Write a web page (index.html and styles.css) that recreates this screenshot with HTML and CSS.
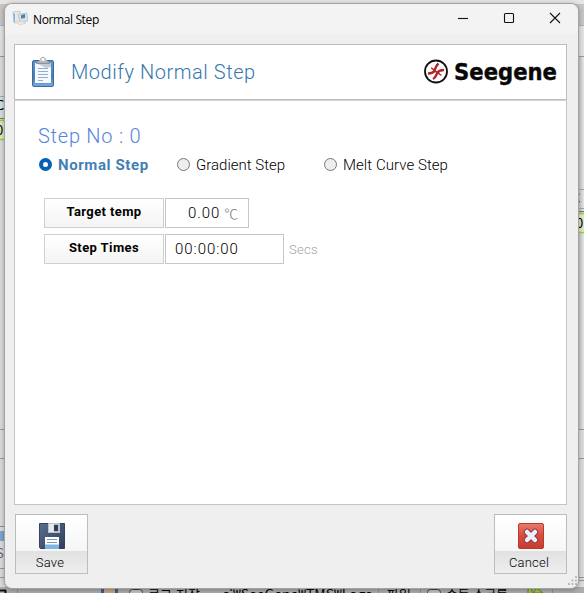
FILE: index.html
```html
<!DOCTYPE html>
<html lang="ko">
<head>
    <meta charset="UTF-8">
    <meta name="viewport" content="width=device-width, initial-scale=1.0">
    <title>Normal Step</title>
    <link rel="stylesheet" href="styles.css">
</head>
<body>
    <!-- Main application window behind the dialog -->
    <svg class="backdrop" width="584" height="593" viewBox="0 0 584 593">
        <defs>
            <linearGradient id="side" x1="0" y1="0" x2="1" y2="0">
                <stop offset="0" stop-color="#c4c4c4"/>
                <stop offset="1" stop-color="#e6e6e6"/>
            </linearGradient>
        </defs>
        <rect width="584" height="593" fill="#dcdcdc"/>
        <rect width="584" height="4" fill="#e6e6e6"/>
        <rect y="4" width="584" height="22" fill="#c6c6c6"/>
        <path d="M0 25.5h584" stroke="#9fb6d4"/>
        <rect y="26" width="584" height="30" fill="#e2e2e2"/>
        <path d="M0 56.5h584M0 429.5h584M0 458.5h584" stroke="#9a9a9a"/>
        <rect x="578" y="57" width="6" height="372" fill="url(#side)"/>
        <rect y="96" width="5" height="20" fill="#d3dde0"/>
        <path d="M0 96.5h5M578 189.5h6M578 208.5h6" stroke="#8ab0bd"/>
        <path d="M0 118.5h5M578 211.5h6" stroke="#8b6f68"/>
        <rect y="120" width="5" height="20" fill="#dbe8c2"/>
        <rect x="578" y="213" width="6" height="20" fill="#dbe8c2"/>
        <path d="M0 120.5h5M0 139.5h5M578 213.5h6M578 232.5h6" stroke="#94d42f" stroke-width="1.5"/>
        <text x="-4" y="110" class="back-text">C</text>
        <text x="-4" y="135" class="back-text">0</text>
        <text x="572" y="203" class="back-text">C</text>
        <text x="576" y="228" class="back-text">0</text>
        <path d="M0 526.5h5" stroke="#8e8e8e"/>
        <rect y="531" width="5" height="10" fill="#7da5cb"/>
        <text x="-4" y="558" class="back-text" fill="#667">S</text>
        <path d="M0 568.5h5M0 577.5h5M578 577.5h6M578 580.5h6" stroke="#999"/>
        <!-- Bottom tool bar -->
        <rect y="587" width="584" height="6" fill="#adadad"/>
        <path d="M17.5 587v6M378.5 587v6M420.5 587v6M552.5 587v6" stroke="#8d8d8d"/>
        <path d="M0 590.5h6M5.5 590v3" stroke="#111" stroke-width="2"/>
        <rect x="101" y="587" width="17" height="6" fill="#3b5d8e"/>
        <rect x="104" y="588" width="11" height="5" fill="#c9a486"/>
        <rect x="129.5" y="589.5" width="13" height="12" rx="3" fill="#c3c3c3" stroke="#444"/>
        <rect x="427.5" y="589.5" width="13" height="12" rx="3" fill="#c3c3c3" stroke="#444"/>
        <text x="148" y="599" class="back-text" textLength="52">로그 저장</text>
        <text x="222" y="599" class="back-text" textLength="150" lengthAdjust="spacingAndGlyphs">c:₩SeeGene₩TMS₩Logs</text>
        <text x="387" y="599" class="back-text" textLength="24">파일</text>
        <text x="446" y="599" class="back-text" textLength="62">수동 스크롤</text>
        <path d="M528 593v-6h4v6M533 593l4-5 6 5z" fill="#a6c63d" stroke="#5e7c2b"/>
    </svg>

    <div class="dialog">
        <!-- Title bar -->
        <div class="titlebar">
            <svg class="app-icon" width="16" height="16" viewBox="0 0 16 16">
                <path d="M1 2l7-1v11l-6 1z" fill="#e3e8ec" stroke="#b9c3ca" stroke-width=".8"/>
                <path d="M1 3l2 1v8l-1 0z" fill="#8fb3d0"/>
                <path d="M6 4l9-1 1 8-8 1z" fill="#d7dfe5" stroke="#b6bdc2" stroke-width=".7"/>
                <path d="M9 5l4-1v4l-4 .5z" fill="#4686b7"/>
                <path d="M3 12l7-1 4 2-6 2z" fill="#eee5d9" stroke="#ccc" stroke-width=".6"/>
            </svg>
            <span class="title">Normal Step</span>
            <div class="window-buttons">
                <svg width="12" height="12" viewBox="0 0 12 12"><path d="M1 6.5h10"/></svg>
                <svg width="12" height="12" viewBox="0 0 12 12"><rect x="1.5" y="1.5" width="9" height="9" rx="1"/></svg>
                <svg width="12" height="12" viewBox="0 0 12 12"><path d="M1 1l10 10M11 1L1 11"/></svg>
            </div>
        </div>

        <!-- Header with logo -->
        <div class="header">
            <svg class="clipboard" width="26" height="32" viewBox="0 0 26 32">
                <defs>
                    <linearGradient id="board" x1="0" y1="0" x2="0" y2="1">
                        <stop offset="0" stop-color="#5f93c8"/>
                        <stop offset=".65" stop-color="#4a7db9"/>
                        <stop offset="1" stop-color="#76ade0"/>
                    </linearGradient>
                    <linearGradient id="clip" x1="0" y1="0" x2="0" y2="1">
                        <stop offset="0" stop-color="#fafafa"/>
                        <stop offset="1" stop-color="#9da4aa"/>
                    </linearGradient>
                </defs>
                <rect x="2.5" y="4.5" width="21" height="26" rx="1.5" fill="url(#board)" stroke="#3d6a9f"/>
                <path d="M5 7h16v20H5z" fill="#f7fafd"/>
                <path d="M6 7h15v4l-5 1z" fill="#c5cbd2"/>
                <path d="M8 12.5h10M8 15.5h10M8 18.5h10M8 21.5h10M8 24.5h5" stroke="#8fb0d3"/>
                <path d="M6.5 7.5c0-3 3-2 4-4 .5-3 4.5-3 5 0 1 2 4 1 4 4z" fill="url(#clip)" stroke="#848d95" stroke-width=".8"/>
                <circle cx="13" cy="3.5" r="1.2" fill="#fff"/>
            </svg>
            <h1>Modify Normal Step</h1>
            <svg class="logo" width="136" height="34" viewBox="0 0 136 34">
                <circle cx="13" cy="16.5" r="11" fill="#fff" stroke="#111" stroke-width="1.8"/>
                <path d="M5 18.5c3.500 0 5-.5 6.500-2.500 1-3 1-5 4-7.500" fill="none" stroke="#b1252a" stroke-width="2.400"/>
                <path d="M10 24c3-1.500 3-4 4.500-6.500 1.500-2 3.500-2.500 6.500-2.500" fill="none" stroke="#b1252a" stroke-width="2.400"/>
                <path d="M8 13c2 0 2.500 1.500 3.500 3l3 1.500c1.500 1 2 2.500 4 2.500" fill="none" stroke="#b1252a" stroke-width="1.500"/>
                <text x="31" y="25" textLength="103" lengthAdjust="spacingAndGlyphs">Seegene</text>
            </svg>
        </div>

        <!-- Step settings -->
        <form class="content" id="stepForm">
            <h2>Step No : 0</h2>
            <div class="step-types">
                <label class="type-normal"><input type="radio" name="stepType" checked><span>Normal Step</span></label>
                <label class="type-gradient"><input type="radio" name="stepType"><span>Gradient Step</span></label>
                <label class="type-melt"><input type="radio" name="stepType"><span>Melt Curve Step</span></label>
            </div>
            <div class="field">
                <div class="field-label">Target temp</div>
                <div class="field-box temp"><span class="value">0.00</span><span class="unit">℃</span></div>
            </div>
            <div class="field">
                <div class="field-label">Step Times</div>
                <div class="field-box time"><span class="value">00:00:00</span></div>
                <span class="secs">Secs</span>
            </div>
        </form>

        <!-- Save and cancel -->
        <div class="footer">
            <button class="save" type="button">
                <svg width="28" height="28" viewBox="0 0 28 28">
                    <defs>
                        <linearGradient id="disk" x1="0" y1="0" x2="1" y2="1">
                            <stop offset="0" stop-color="#5a6c8d"/>
                            <stop offset="1" stop-color="#303e5b"/>
                        </linearGradient>
                        <linearGradient id="paper" x1="0" y1="0" x2="0" y2="1">
                            <stop offset=".6" stop-color="#fff"/>
                            <stop offset=".65" stop-color="#7fb5e5"/>
                        </linearGradient>
                    </defs>
                    <path d="M1.5 1.5h25v25h-24l-1-1z" fill="url(#disk)" stroke="#35435f"/>
                    <path d="M10 1h12v10H10z" fill="#b9c1ce"/>
                    <path d="M11 2h5v8h-5z" fill="#e4e8ed"/>
                    <path d="M16 3h4v6h-4z" fill="#303b52"/>
                    <path d="M7 15h14v12H7z" fill="url(#paper)"/>
                    <path d="M9 17.5h10M9 20.5h10" stroke="#7898bd"/>
                </svg>
                <span>Save</span>
            </button>
            <button class="cancel" type="button">
                <svg width="28" height="28" viewBox="0 0 28 28">
                    <defs>
                        <linearGradient id="red" x1="0" y1="0" x2="0" y2="1">
                            <stop offset="0" stop-color="#e77b6e"/>
                            <stop offset=".5" stop-color="#d84a3e"/>
                            <stop offset="1" stop-color="#c83c30"/>
                        </linearGradient>
                    </defs>
                    <rect x="1.5" y="1.5" width="25" height="25" rx="1.5" fill="url(#red)" stroke="#b83a30"/>
                    <path d="M10 10l8 8M18 10l-8 8" stroke="#8d3b43" stroke-width="6.5" stroke-linecap="round"/>
                    <path d="M10 10l8 8M18 10l-8 8" stroke="#eeeefa" stroke-width="4.5" stroke-linecap="round"/>
                </svg>
                <span>Cancel</span>
            </button>
        </div>

        <svg class="grip" width="10" height="10" viewBox="0 0 10 10">
            <path d="M7 0h2v2H7zM7 3.5h2v2H7zM7 7h2v2H7zM3.5 3.5h2v2h-2zM3.5 7h2v2h-2zM0 7h2v2H0z"/>
        </svg>
    </div>
</body>
</html>
```
FILE: styles.css
```css
* {
    box-sizing: border-box;
}

body {
    margin: 0;
    width: 584px;
    height: 593px;
    overflow: hidden;
    position: relative;
    font-family: Roboto, "Noto Sans CJK KR", sans-serif;
    font-weight: 300;
    color: #000;
}

.backdrop {
    display: block;
}

.back-text {
    font-family: "Noto Sans CJK KR", sans-serif;
    font-size: 13px;
    font-weight: 400;
}

/* Dialog window */
.dialog {
    position: absolute;
    left: 4px;
    top: 3px;
    width: 575px;
    height: 586px;
    padding: 0 11px 0 10px;
    display: flex;
    flex-direction: column;
    background: #efefef;
    border: 1px solid #a3a3a3;
    border-radius: 8px;
    box-shadow: 0 1px 5px rgba(0, 0, 0, 0.3);
}

.titlebar {
    display: flex;
    align-items: center;
    height: 30px;
    margin: 0 -11px 10px -10px;
    padding: 0 17px 0 7px;
    background: #f3f3f3;
    border-radius: 8px 8px 0 0;
}

.app-icon {
    margin-top: -3px;
}

.title {
    margin: 0 0 0 5px;
    font-family: "Open Sans", sans-serif;
    font-weight: 400;
    font-size: 12px;
    letter-spacing: -0.38px;
}

.window-buttons {
    display: flex;
    gap: 34px;
    margin: -2px 0 0 auto;
}

.window-buttons svg {
    fill: none;
    stroke: #111;
    stroke-width: 1.1;
}

/* Header */
.header {
    display: flex;
    align-items: center;
    height: 56px;
    flex-shrink: 0;
    padding: 0 7px 0 15px;
    margin: 0 0 0 -1px;
    background: #fff;
    border: 1px solid #bdbdbd;
}

.header h1 {
    margin: 0 0 0 15px;
    font-size: 20px;
    font-weight: 300;
    line-height: 30px;
    letter-spacing: 0.55px;
    color: #3577ad;
}

.logo {
    margin-left: auto;
}

.logo text {
    font-family: "DejaVu Sans", sans-serif;
    font-weight: bold;
    font-size: 23px;
    fill: #080808;
    stroke: #080808;
    stroke-width: 0.4;
}

/* Content */
.content {
    height: 405px;
    margin-left: -1px;
    padding: 20px 0 0 23px;
    background: #fff;
    border: 1px solid #c4c4c4;
    border-top: 1px solid #d2d2d2;
}

.content h2 {
    margin: 0;
    font-size: 20px;
    font-weight: 300;
    line-height: 30px;
    letter-spacing: 0.75px;
    color: #5583dc;
}

.step-types {
    display: flex;
    height: 28px;
    margin-bottom: 19px;
}

.step-types label {
    display: flex;
    align-items: center;
    font-size: 15px;
}

.step-types input {
    appearance: none;
    width: 13px;
    height: 13px;
    margin: -1px 6px 0 1px;
    border: 1px solid #777;
    border-radius: 50%;
    background: #eee;
}

.step-types input:checked {
    border: 4px solid #0560b6;
    background: #fff;
}

.type-normal {
    width: 138px;
    font-weight: 700;
    letter-spacing: 0.6px;
    color: #4480b3;
}

.type-gradient {
    width: 147px;
}

.type-melt {
    letter-spacing: 0.06px;
}

.field {
    display: flex;
    align-items: center;
    gap: 1px;
    height: 30px;
    margin: 0 0 6px 6px;
}

.field-label {
    width: 120px;
    height: 30px;
    line-height: 26px;
    text-align: center;
    font-size: 13px;
    font-weight: bold;
    letter-spacing: 0.4px;
    border: 1px solid #d0d0d0;
    background: linear-gradient(#fff, #f4f4f4);
}

.field-box {
    display: flex;
    align-items: center;
    height: 30px;
    border: 1px solid #c6c6c6;
    background: #fff;
    font-size: 15px;
}

.temp {
    width: 84px;
    padding: 0 0 1px 22px;
}

.unit {
    margin-left: 4px;
    color: #777;
    font-size: 14px;
}

.time {
    width: 119px;
    padding-left: 9px;
}

.value {
    letter-spacing: 0.95px;
}

.secs {
    margin-left: 4px;
    font-size: 13px;
    letter-spacing: 0.3px;
    color: #a5a5a5;
}

/* Footer buttons */
.footer {
    display: flex;
    justify-content: space-between;
    margin-top: 9px;
}

.footer button {
    display: flex;
    flex-direction: column;
    flex-shrink: 0;
    align-items: center;
    justify-content: flex-start;
    width: 73px;
    height: 60px;
    padding: 7px 0 0;
    border: 1px solid #bdbdbd;
    background: linear-gradient(#fff 0, #f6f6f6 36px, #e1e1e1 36px, #eee 100%);
    font-family: inherit;
    font-size: 13px;
    font-weight: 300;
    color: #000;
}

.footer svg {
    flex-shrink: 0;
}

.footer span {
    margin-top: 3px;
    margin-right: 3px;
    line-height: 20px;
    letter-spacing: 0.2px;
}

.grip {
    position: absolute;
    right: 0;
    bottom: 2px;
    fill: #bbb;
}
```
